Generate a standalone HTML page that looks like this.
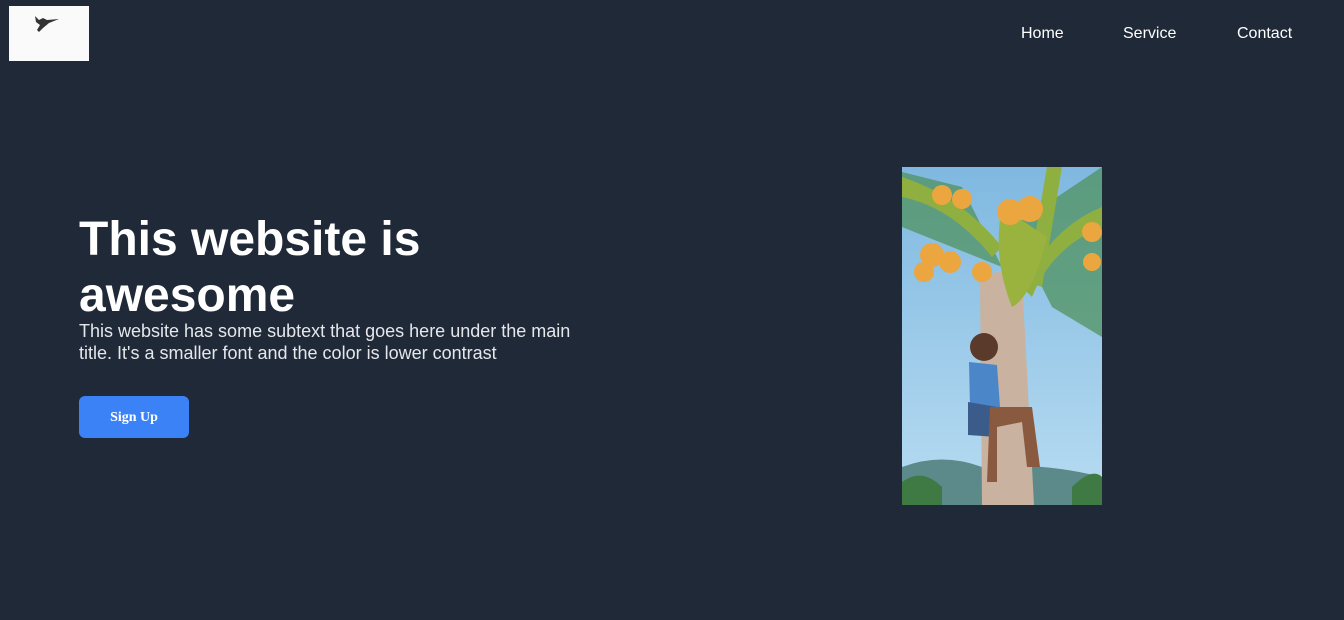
<!DOCTYPE html>
<html><head><style>
body{margin:0;width:1344px;height:620px;background:#1f2937;font-family:"Liberation Sans",sans-serif;position:relative;overflow:hidden}
.logo{position:absolute;left:9px;top:6px;width:80px;height:55px;background:#fafafa}
nav a{position:absolute;top:25px;color:#fff;font-size:16px;text-decoration:none}
h1{position:absolute;left:79px;top:212px;margin:0;font-size:48px;line-height:56px;color:#fff;font-weight:bold;width:500px}
p{position:absolute;left:79px;top:320px;margin:0;font-size:18px;line-height:22px;color:#e5e7eb;width:520px}
.btn{position:absolute;left:79px;top:396px;width:110px;height:42px;background:#3b82f6;border-radius:6px;color:#fff;font:bold 14px "Liberation Serif",serif;text-align:center;line-height:43px}
svg.pic{position:absolute;left:902px;top:167px}
</style></head><body>
<div class="logo"><svg width="80" height="55"><path d="M26 10 L30 14 L34 12 L38 14 L50 13 L40 17 L34 22 L30 26 L28 24 L31 19 L27 16 Z" fill="#333"/></svg></div>
<nav><a style="left:1021px">Home</a><a style="left:1123px">Service</a><a style="left:1237px">Contact</a></nav>
<h1>This website is awesome</h1>
<p>This website has some subtext that goes here under the main title. It's a smaller font and the color is lower contrast</p>
<div class="btn">Sign Up</div>
<svg class="pic" width="200" height="338" viewBox="0 0 200 338">
<defs><linearGradient id="s" x1="0" y1="0" x2="0" y2="1"><stop offset="0" stop-color="#7fb8e0"/><stop offset="1" stop-color="#b8dcf2"/></linearGradient></defs>
<rect width="200" height="338" fill="url(#s)"/>
<path d="M0 300 Q40 285 80 300 Q140 295 200 310 V338 H0Z" fill="#5c8a8a"/>
<path d="M0 315 Q20 300 40 320 V338 H0Z M170 320 Q190 300 200 310 V338 H170Z" fill="#3f7a45"/>
<path d="M0 5 L60 20 L100 100 L0 60Z M200 0 L200 170 L150 140 L110 60Z" fill="#4c8f55" opacity=".7"/>
<path d="M0 10 Q60 30 100 80 L90 90 Q50 40 0 30Z M200 60 Q150 80 130 130 L120 120 Q150 60 200 40Z M160 0 L140 120 L125 115 L145 0Z" fill="#8fb040"/>
<path d="M78 110 Q100 100 120 110 L132 338 H80Z" fill="#c9b2a0"/>
<path d="M100 40 Q90 90 110 140 Q130 130 145 70Z" fill="#9ab23e"/>
<g fill="#eba640"><circle cx="40" cy="28" r="10"/><circle cx="60" cy="32" r="10"/><circle cx="108" cy="45" r="13"/><circle cx="128" cy="42" r="13"/><circle cx="30" cy="88" r="12"/><circle cx="48" cy="95" r="11"/><circle cx="22" cy="105" r="10"/><circle cx="80" cy="105" r="10"/><circle cx="190" cy="65" r="10"/><circle cx="190" cy="95" r="9"/></g>
<circle cx="82" cy="180" r="14" fill="#5a3a2a"/>
<path d="M67 195 L95 198 L98 240 L68 240Z" fill="#4a86c8"/>
<path d="M66 235 L95 240 L95 270 L66 268Z" fill="#3b5c8a"/>
<path d="M88 240 L130 240 L138 300 L125 300 L120 255 L95 260 L95 315 L85 315Z" fill="#8a5a40"/>
</svg>
</body></html>
